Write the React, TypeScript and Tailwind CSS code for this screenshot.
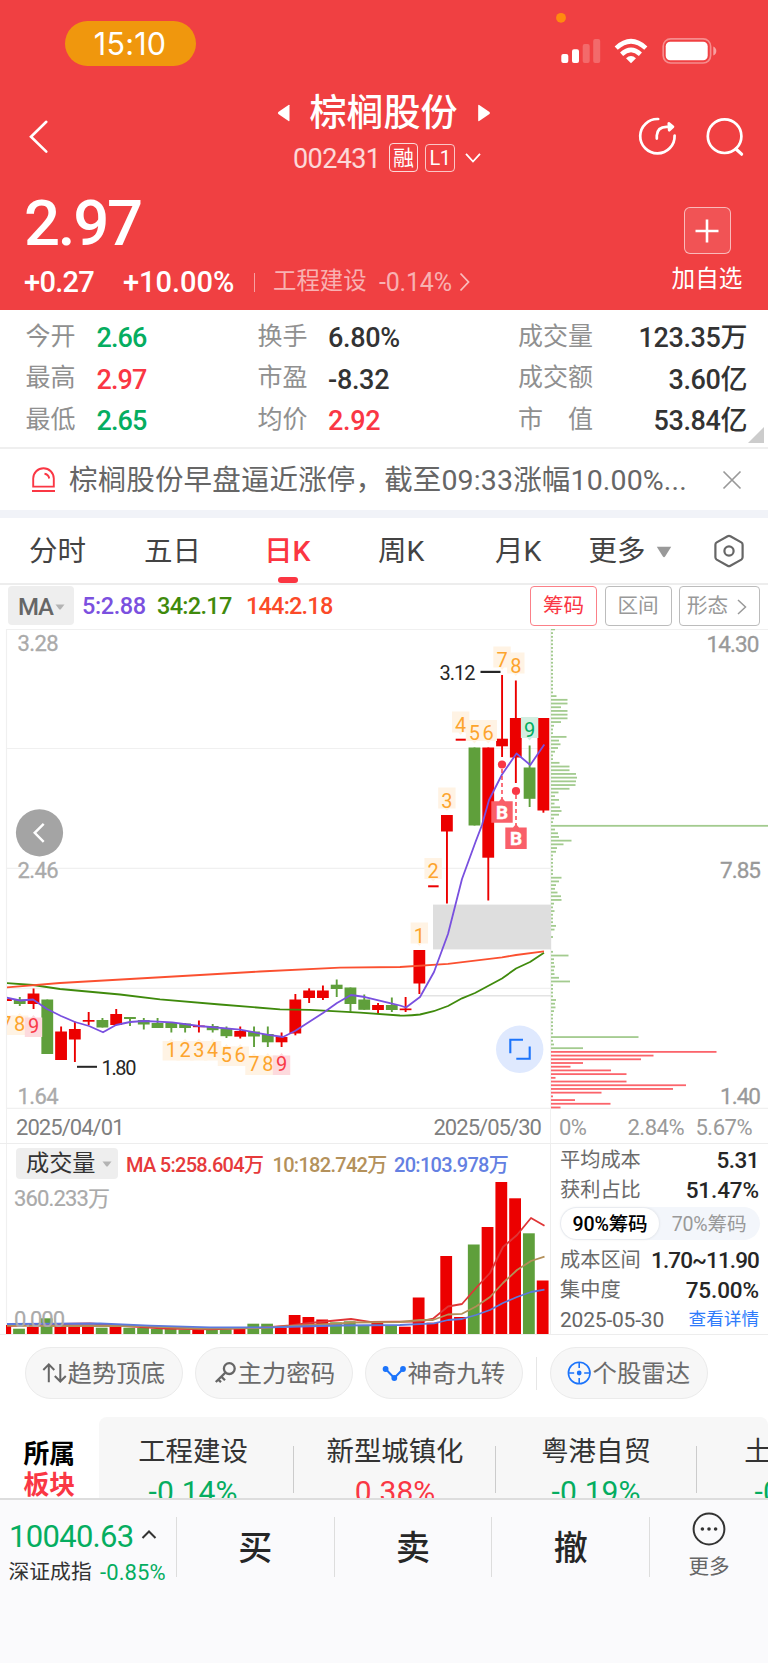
import React from 'react';

const RED = '#ec0000';
const GREEN = '#5f9f3b';

type Candle = [number, 'r' | 'g', number, number, number, number];

// index, colour, body top, body bottom, wick top, wick bottom
const CANDLES: Candle[] = [
  [-2, 'r', 999, 1001, 999, 1001],
  [-1, 'g', 999.5, 1004, 997, 1006],
  [0, 'r', 993.5, 1004, 988.5, 1009],
  [1, 'g', 999.5, 1054, 999.5, 1054],
  [2, 'r', 1031.5, 1060, 1026.5, 1060],
  [3, 'r', 1029, 1039.5, 1021.5, 1062],
  [4, 'r', 1020, 1021.7, 1012, 1025],
  [5, 'g', 1020, 1027.5, 1018, 1027.5],
  [6, 'r', 1014, 1025, 1009, 1025],
  [7, 'g', 1017, 1019, 1017, 1026],
  [8, 'g', 1020, 1024.5, 1018, 1029.5],
  [9, 'g', 1023, 1028, 1018, 1028],
  [10, 'g', 1023, 1028, 1022, 1032.5],
  [11, 'g', 1023.5, 1028, 1023, 1032.5],
  [12, 'r', 1025.5, 1027.2, 1020.5, 1032.5],
  [13, 'g', 1026, 1030.2, 1024, 1032.5],
  [14, 'g', 1028.5, 1036.2, 1026.5, 1038],
  [15, 'r', 1031, 1036.7, 1026.5, 1038.5],
  [16, 'g', 1031.5, 1036.5, 1026.5, 1047],
  [17, 'g', 1034, 1042.3, 1026.5, 1047],
  [18, 'r', 1037, 1042.3, 1032.5, 1047],
  [19, 'r', 999.5, 1033.5, 994, 1035.3],
  [20, 'r', 990.5, 998, 988.3, 1003],
  [21, 'r', 990.5, 998, 985.5, 1000],
  [22, 'g', 984.7, 989, 979.5, 997],
  [23, 'g', 987.5, 1004, 987.5, 1011.7],
  [24, 'g', 999.5, 1009.8, 994.5, 1009.8],
  [25, 'r', 1005, 1010, 1003, 1014],
  [26, 'g', 1005, 1010, 997.5, 1012],
  [27, 'r', 1008.5, 1010.2, 997, 1012],
  [28, 'r', 950, 983.5, 950, 994],
  [29, 'r', 885.3, 887.3, 886, 887],
  [30, 'r', 815, 831.5, 815, 903.5],
  [31, 'r', 738.7, 740.7, 739, 740],
  [32, 'g', 747.5, 825.5, 747.5, 825.5],
  [33, 'r', 747.5, 857.7, 747.5, 900.5],
  [34, 'r', 738.7, 746.3, 675, 757],
  [35, 'r', 718, 757.5, 680.5, 783],
  [36, 'g', 767.5, 798.8, 745.5, 807],
  [37, 'r', 718, 810.5, 718, 812.7],
];

const VOLUMES = [
  1325, 1328.7, 1326.7, 1318.3, 1326.5, 1325, 1326, 1327.7, 1325.5, 1327.7, 1328, 1328.7, 1328.7, 1329.5, 1329.5,
  1329.5, 1329.3, 1329, 1323.7, 1323.7, 1328, 1315, 1317, 1319.5, 1322.3, 1321.3, 1325, 1322.7, 1325, 1326.7, 1297.5,
  1322.7, 1256, 1317, 1244.5, 1227, 1182, 1198.3, 1233.3, 1280.5,
];

const CHIPS = [
  4, 2, 2, 2, 2, 2, 2, 2, 2, 2, 2, 2, 2, 2, 2, 2, 2, 2, 5.5, 16.5, 16.5, 10, 16.5, 16.5, 16.5, 10, 3, 2, 2, 15.5, 8,
  9.5, 7, 4, 2, 2, 8.5, 18.5, 18.5, 25, 26, 25, 24.5, 18.5, 7.5, 4, 8, 3.5, 9, 10.5, 8, 3, 2, 217, 4, 7, 8, 20.5, 12.5,
  6, 5, 2, 2, 2, 2, 2, 2, 10.5, 8, 5, 4, 6.5, 10, 10.5, 3, 2, 3.5, 2, 2, 2, 5, 3.5, 0, 2, 0, 0, 0, 2, 17.5, 3, 3, 4, 3,
  3.5, 8, 19, 2, 2, 2, 2, 5, 4, 4.5, 3, 2, 2, 2, 2, 2, 2, 87.5, 2, 3, 32, 165.5, 102.5, 90, 32, 19.5, 60, 75.5, 4.5,
  75.5, 135, 122, 50.5, 2, 24, 59.5, 9.5,
];

// candle index, digit, top of the tag, pointer direction, tone
const TAGS: [number, string, number, 'up' | 'down', 'o' | 'p' | 'g'][] = [
  [-2, '7', 1015.5, 'up', 'o'],
  [-1, '8', 1015.5, 'up', 'o'],
  [0, '9', 1017.5, 'up', 'p'],
  [10, '1', 1041, 'up', 'o'],
  [11, '2', 1041, 'up', 'o'],
  [12, '3', 1041, 'up', 'o'],
  [13, '4', 1041, 'up', 'o'],
  [14, '5', 1046.5, 'up', 'o'],
  [15, '6', 1046.5, 'up', 'o'],
  [16, '7', 1055.5, 'up', 'o'],
  [17, '8', 1055.5, 'up', 'o'],
  [18, '9', 1055.5, 'up', 'p'],
  [28, '1', 922.5, 'down', 'o'],
  [29, '2', 858, 'down', 'o'],
  [30, '3', 787.5, 'down', 'o'],
  [31, '4', 711.5, 'down', 'o'],
  [32, '5', 720, 'down', 'o'],
  [33, '6', 720, 'down', 'o'],
  [34, '7', 646.5, 'down', 'o'],
  [35, '8', 652.5, 'down', 'o'],
  [36, '9', 717, 'down', 'g'],
];

const TONES = {
  o: ['#fff3e4', '#fda42d'],
  p: ['#fddadd', '#f93a48'],
  g: ['#d2efe1', '#02ad60'],
};

const cx = (i: number) => 33.5 + 13.78 * i;

function KLineChart() {
  return (
    <svg className="block h-[480px] w-[768px]" viewBox="0 629 768 480" fontFamily="Roboto, sans-serif">
      <defs>
        <clipPath id="plot">
          <rect x="7" y="629" width="544" height="480" />
        </clipPath>
      </defs>
      <g stroke="#f0f0f0" strokeWidth="1.2">
        <path d="M6.5 629.5H768M6.5 748.5H551M6.5 868.3H551M6.5 988.3H551M6.5 1108.4H768M6.5 629V1109M550.8 629V1109" />
      </g>
      <path d="M420 995.7H551" stroke="#e3e3e3" strokeWidth="1.6" />
      <g fontSize="22" fill="#aaaaaa" stroke="#aaaaaa" strokeWidth="0.3">
        <text x="17.5" y="651" textLength="41">3.28</text>
        <text x="17.5" y="877.5" textLength="41">2.46</text>
        <text x="17.5" y="1103.5" textLength="41">1.64</text>
      </g>
      <g fontSize="22.5" fill="#999999" stroke="#999999" strokeWidth="0.3" textAnchor="end">
        <text x="759.5" y="651.5" textLength="53">14.30</text>
        <text x="761" y="877.5" textLength="41">7.85</text>
        <text x="761" y="1104" textLength="41">1.40</text>
      </g>

      {CHIPS.map((w, n) => (
        <rect
          key={n}
          x="551"
          y={628.5 + n * 3.706}
          width={w}
          height="1.8"
          fill={n >= 114 ? '#fb646b' : '#a3cb8f'}
        />
      ))}

      <g clipPath="url(#plot)">
        {CANDLES.map(([i, c, top, bottom, high, low]) => (
          <g key={i} fill={c === 'r' ? RED : GREEN}>
            <rect x={cx(i) - 0.9} y={high} width="1.9" height={low - high} />
            <rect
              x={cx(i) - (i === 29 || i === 31 ? 5 : 5.9)}
              y={top}
              width={i === 29 || i === 31 ? 10.5 : 11.8}
              height={bottom - top}
            />
          </g>
        ))}
        <rect x="433" y="904.6" width="118" height="44.8" fill="#dedede" />
        {TAGS.map(([i, d, y, dir, tone]) => (
          <g key={i + d}>
            <path
              d={
                dir === 'up'
                  ? `M${cx(i) - 8.7} ${y}h6.5l2.2-2.5 2.2 2.5h6.5v19.5h-17.4z`
                  : `M${cx(i) - 8.7} ${y}h17.4v21h-6.5l-2.2 2.5-2.2-2.5h-6.5z`
              }
              fill={TONES[tone][0]}
            />
            <text
              x={cx(i)}
              y={y + (dir === 'up' ? 15.5 : 20)}
              fontSize="20"
              textAnchor="middle"
              fill={TONES[tone][1]}
            >
              {d}
            </text>
          </g>
        ))}
        <g fill="none" strokeWidth="1.8" strokeLinejoin="round">
          <path
            stroke="#3f8a0c"
            d="M6 983L33 985L60 989L120 994.5L160 999.3L220 1004.5L280 1009.4L310 1009.8L360 1012.7L400 1015.5Q410 1015.8 420 1014.5Q434 1012 448 1006L462 998.3L475 993Q488 986 502 978.5L516 968.5L530 962L544 952.7"
          />
          <path
            stroke="#fb5030"
            d="M6 987.5L60 983L130 979L200 975L260 971.5L340 967.6L400 967L448 963.8L502 957.3L516 955L544 951.3"
          />
          <path
            stroke="#7950df"
            d="M6 997.5L20 1000.5L33 999.5L47 1009L61 1016L75 1022L89 1026L103 1032.3L116 1025L130 1022L144 1021L172 1022.3L199 1026L240 1029.7L267 1034.7L283 1037L295 1031L309 1022L323 1013L337 1003L351 995L365 997L392 1003.5L400 1005.5L406 1007.5L420 997L434 972L448 934L462 879L475.5 842L482 825L489 800L502 774.5L516.5 753.5L530.3 765L544.3 744.5"
          />
        </g>
        <g stroke="#f93745" strokeWidth="1.4" strokeDasharray="4 3">
          <path d="M502 769V799M516 795V825" />
        </g>
        <g fill="#f93745">
          <circle cx="502" cy="764.5" r="4.1" />
          <circle cx="516" cy="791" r="4.1" />
        </g>
        <g fill="#f95f69">
          <path d="M491.3 801.3h7.7l3-3.5 3 3.5h7.7V822.8h-21.4z" />
          <path d="M505.3 827.6h7.7l3-3.5 3 3.5h7.7V849h-21.4z" />
        </g>
        <g fill="#fff" stroke="#fff" strokeWidth="0.4" fontSize="19" fontWeight="700" textAnchor="middle">
          <text x="502" y="818.7">B</text>
          <text x="516" y="845">B</text>
        </g>
      </g>

      <g fill="#262626" fontSize="20">
        <text x="439.5" y="679.5" textLength="36">3.12</text>
        <rect x="480.5" y="670.8" width="20" height="2.2" />
        <text x="101.5" y="1074.8" textLength="35">1.80</text>
        <rect x="77" y="1065.8" width="20" height="2" />
      </g>

      <circle cx="39.5" cy="832.8" r="23.6" fill="#a4a4a4" />
      <path d="M43.7 823.8L34.7 832.8L43.7 841.8" fill="none" stroke="#fff" strokeWidth="2.4" />
      <circle cx="519.7" cy="1049.3" r="23.7" fill="#dfe9fe" />
      <path
        d="M523 1039.8H510.3V1053.2M529.7 1046.5V1058.7H516.3"
        fill="none"
        stroke="#1c74fb"
        strokeWidth="2.1"
      />
    </svg>
  );
}

function VolumeChart() {
  return (
    <svg className="block h-[156px] w-[550px]" viewBox="0 1179 550 156" fontFamily="Roboto, 'Noto Sans CJK SC', sans-serif">
      <path d="M6.5 1179V1335" stroke="#f0f0f0" strokeWidth="1.2" />
      {VOLUMES.map((top, k) => {
        const x = Math.max(6, cx(k - 2) - 6.6);
        const end = cx(k - 2) + 5.2;
        return (
          <rect key={k} x={x} y={top} width={end - x} height={1334 - top} fill={CANDLES[k][1] === 'r' ? RED : GREEN} />
        );
      })}
      <g fill="none" strokeWidth="1.8" strokeLinejoin="round">
        <path
          stroke="#df3536"
          d="M7 1326L60 1324L90 1323.5L125 1326L165 1328.5L210 1329.3L260 1327.8L290 1325.3L310 1323L325 1321.5L351 1319L370 1321.8L420 1321.5L433 1318.7L448 1306.5L462 1304L476 1288L490 1273L503 1247L517 1235L531 1218L544.5 1225.7"
        />
        <path
          stroke="#b38f58"
          d="M7 1325.5L60 1326L140 1326L200 1328.5L260 1328L300 1325.5L340 1323.5L351 1322.5L400 1322L420 1320L433 1320L448 1314.5L462 1313.8L476 1306.5L490 1297L503 1283L517 1270L531 1261L544.5 1256.7"
        />
        <path
          stroke="#5c7ade"
          d="M7 1324L100 1323.5L150 1325.7L210 1327.3L270 1327.3L300 1326.5L340 1325.5L400 1325L434 1323.4L448 1320L462 1319L476 1315L490 1310L503 1303L517 1297L531 1292L544.5 1289.7"
        />
      </g>
      <g fontSize="22" fill="#aaaaaa" stroke="#aaaaaa" strokeWidth="0.2">
        <text x="14" y="1205.5" textLength="96">360.233万</text>
        <text x="14" y="1327" textLength="51">0.000</text>
      </g>
    </svg>
  );
}

function Caret({ className }: { className: string }) {
  return (
    <svg className={className} viewBox="0 0 10 7" preserveAspectRatio="none">
      <path d="M0.5 0.5H9.5L5.8 6Q5 7 4.2 6Z" fill="currentColor" />
    </svg>
  );
}

function StatRow({ cells }: { cells: [string, string, string][] }) {
  return (
    <div className="flex h-[41.5px] items-center pr-[21px] text-[25px] leading-none">
      <span className="w-[71px] shrink-0 text-[#909090]">{cells[0][0]}</span>
      <span className={`w-[161px] shrink-0 pt-[5px] text-[27px] font-medium tracking-[-0.9px] ${cells[0][2]}`}>
        {cells[0][1]}
      </span>
      <span className="w-[70.5px] shrink-0 text-[#909090]">{cells[1][0]}</span>
      <span className={`w-[190px] shrink-0 pt-[5px] text-[27px] font-medium tracking-[-0.3px] ${cells[1][2]}`}>
        {cells[1][1]}
      </span>
      <span className="w-[80px] shrink-0 whitespace-pre text-[#909090]">{cells[2][0]}</span>
      <span className={`flex-1 pt-[5px] text-right text-[27px] font-medium tracking-[-0.4px] ${cells[2][2]}`}>
        {cells[2][1]}
      </span>
    </div>
  );
}

function Header() {
  return (
    <header className="h-[310px] bg-[#f04042] text-white">
      <div className="flex h-[82px] items-start justify-between pl-[64.5px]">
        <div className="mt-[21px] flex h-[45px] w-[131px] items-center justify-center rounded-full bg-[#f0970d] pt-[2px] font-['Inter'] text-[30.5px] leading-none tracking-[0.2px]">
          15:10
        </div>
        <svg className="h-[82px] w-[228px]" viewBox="540 0 228 82">
          <circle cx="561" cy="17.8" r="4.9" fill="#ff8a0f" />
          <g fill="#fff">
            <rect x="561.3" y="54" width="7" height="9" rx="2" />
            <rect x="572" y="49.2" width="7" height="13.8" rx="2" />
            <rect x="582.7" y="44" width="7" height="19" rx="2" opacity="0.22" />
            <rect x="593.2" y="39" width="7" height="24" rx="2" opacity="0.22" />
          </g>
          <g fill="none" stroke="#fff" strokeWidth="4.6">
            <path d="M616.2 48.1Q631 34.4 645.8 48.1" />
            <path d="M621.6 54.2Q631 45.6 640.4 54.2" />
          </g>
          <path d="M626 58.2Q631 53.6 636 58.2L631 63.3Z" fill="#fff" />
          <rect x="663.2" y="38.8" width="47.4" height="24.2" rx="7.5" fill="none" stroke="#fff" strokeOpacity="0.4" strokeWidth="1.7" />
          <rect x="665.7" y="41.7" width="42" height="18.6" rx="4.5" fill="#fff" />
          <path d="M713.3 46.5Q716.3 48 716.3 51Q716.3 54 713.3 55.5Z" fill="#fff" fillOpacity="0.5" />
        </svg>
      </div>

      <div className="flex h-[108px] items-start">
        <svg className="mt-[36px] ml-[26px] h-[38px] w-[26px]" viewBox="26 118 26 38" fill="none" stroke="#fff" strokeWidth="2.6">
          <path d="M46.3 121.8L31 136.7L46.3 151.6" strokeLinecap="round" />
        </svg>
        <div className="ml-[218px] w-[280px] pt-[11px]">
          <div className="flex items-center pl-[7px]">
            <svg className="h-[18px] w-[14px]" viewBox="0 0 14 18" fill="#fff">
              <path d="M12.5 1.2V16.8Q12.3 17.5 11.5 17L1.3 10Q0.4 9 1.3 8L11.5 0.9Q12.3 0.5 12.5 1.2Z" />
            </svg>
            <h1 className="ml-[18.5px] h-[40px] w-[151px] pt-px text-[37px] leading-[39px] font-medium whitespace-nowrap">棕榈股份</h1>
            <svg className="ml-[16px] h-[18px] w-[14px]" viewBox="0 0 14 18" fill="#fff">
              <path d="M1.2 1.2V16.8Q1.4 17.5 2.2 17L12.5 10Q13.4 9 12.5 8L2.2 0.9Q1.4 0.5 1.2 1.2Z" />
            </svg>
          </div>
          <div className="mt-[9.5px] flex h-[30px] items-center pl-[23px] leading-none">
            <span className="w-[96px] pt-[4px] text-[27px] tracking-[-0.6px] text-white/80">002431</span>
            <span className="flex h-[29px] w-[29px] items-center justify-center rounded-[4px] border-[1.3px] border-white/80 pt-px text-[21px]">
              融
            </span>
            <span className="ml-[7px] flex h-[28px] w-[30px] items-center justify-center rounded-[4px] border border-white/70 text-[20px] tracking-[-0.5px]">
              L1
            </span>
            <svg className="ml-[9px] h-[12px] w-[18px]" viewBox="0 0 18 12" fill="none" stroke="#fff" strokeWidth="1.8">
              <path d="M2 1.8L9 9.5L16 1.8" />
            </svg>
          </div>
        </div>
        <svg className="mt-[30px] ml-[84px] h-[50px] w-[114px]" viewBox="634 112 114 50" fill="none" stroke="#fff" strokeWidth="2.7" strokeLinecap="round" strokeLinejoin="round">
          <path d="M658.2 119A17.2 17.2 0 1 0 674.6 135.5" />
          <path d="M656.8 138.6V135.5Q657.3 127 666.5 126.8H669" />
          <path d="M668.8 123.3L673 126.7L669.2 130.2Z" fill="#fff" />
          <circle cx="724.6" cy="136.2" r="16.8" />
          <path d="M736 149L741.6 154.2" strokeWidth="3.2" />
        </svg>
      </div>

      <div className="flex justify-between">
        <div className="pl-[24px]">
          <div className="h-[73px] pt-px text-[63.5px] leading-[66px] font-medium tracking-[-2.3px]">2.97</div>
          <div className="mt-[2px] flex h-[34px] items-center leading-none">
            <span className="w-[99px] text-[29px] font-medium tracking-[-0.7px]">+0.27</span>
            <span className="w-[131px] text-[29px] font-medium">+10.00%</span>
            <span className="h-[19px] w-px bg-white/50" />
            <span className="ml-[18px] w-[106px] text-[23.4px] text-white/60">工程建设</span>
            <span className="w-[80px] text-[25px] tracking-[-0.2px] text-white/60">-0.14%</span>
            <svg className="h-[20px] w-[12px]" viewBox="0 0 12 20" fill="none" stroke="#fff" strokeOpacity="0.65" strokeWidth="1.8">
              <path d="M1.5 1.5L9.5 10L1.5 18.5" />
            </svg>
          </div>
        </div>
        <div className="mt-[17px] mr-[25.5px] flex w-[71px] flex-col items-center">
          <div className="flex h-[47px] w-[47px] items-center justify-center rounded-[6px] border border-white/60 bg-white/10">
            <svg className="h-[26px] w-[26px]" viewBox="0 0 26 26" stroke="#fff" strokeWidth="2.6">
              <path d="M1.5 13H24.5M13 1.5V24.5" />
            </svg>
          </div>
          <span className="mt-[14px] text-[23.6px] leading-none whitespace-nowrap">加自选</span>
        </div>
      </div>
    </header>
  );
}

function Tabs() {
  const tab = 'flex h-[65px] shrink-0 items-center pt-[4px]';
  return (
    <nav className="flex h-[67px] items-center border-b-2 border-[#ededed] pl-[29px] text-[28.5px] leading-none text-[#434343]">
      <span className={`${tab} w-[115px]`}>分时</span>
      <span className={`${tab} w-[120px]`}>五日</span>
      <span className="flex h-[65px] w-[114px] shrink-0 flex-col font-medium text-[#fb3642]">
        <span className="flex h-[59px] items-center pt-[10px]">日K</span>
        <span className="ml-[13.5px] h-[6px] w-[20px] rounded-[3px] bg-[#fb3642]" />
      </span>
      <span className={`${tab} w-[117px]`}>周K</span>
      <span className={`${tab} w-[93.5px]`}>月K</span>
      <span className={tab}>更多</span>
      <Caret className="mt-[3px] ml-[10px] h-[12px] w-[16px] text-[#999999]" />
      <svg className="ml-[40.5px] h-[34px] w-[34px]" viewBox="0 0 34 34" fill="none" stroke="#666666" strokeWidth="2.2" strokeLinejoin="round">
        <path d="M15.6 2.2Q17 1.4 18.4 2.2L29.3 8.4Q30.6 9.2 30.6 10.7V23.3Q30.6 24.8 29.3 25.6L18.4 31.8Q17 32.6 15.6 31.8L4.7 25.6Q3.4 24.8 3.4 23.3V10.7Q3.4 9.2 4.7 8.4Z" />
        <circle cx="17" cy="17" r="4.6" />
      </svg>
    </nav>
  );
}

function CostPanel() {
  const row = 'flex items-center justify-between leading-none whitespace-nowrap';
  const label = 'text-[20.2px] text-[#6b6b6b]';
  const value = 'text-[22.5px] font-medium text-[#262626]';
  return (
    <div className="h-[191px] w-[218px] border-l border-[#ededed] pr-[9px] pl-[9px]">
      <div className={`${row} h-[31px] pt-[1px]`}>
        <span className={label}>平均成本</span>
        <span className={`${value} tracking-[-0.5px]`}>5.31</span>
      </div>
      <div className={`${row} h-[30px]`}>
        <span className={label}>获利占比</span>
        <span className={`${value} tracking-[-0.1px]`}>51.47%</span>
      </div>
      <div className="mt-[2px] flex h-[33px] w-[200px] items-center rounded-full bg-[#f3f6fb] p-px text-[19.6px] leading-none">
        <span className="flex h-[31px] w-[98px] items-center justify-center rounded-full bg-white pt-[2px] font-medium tracking-[-0.2px] text-black shadow-[0_0_3px_rgba(0,0,0,0.12)]">
          90%筹码
        </span>
        <span className="flex-1 pt-[2px] text-center tracking-[-0.2px] text-[#999999]">70%筹码</span>
      </div>
      <div className={`${row} mt-[5px] h-[30px]`}>
        <span className={label}>成本区间</span>
        <span className={`${value} tracking-[-0.9px]`}>1.70~11.90</span>
      </div>
      <div className={`${row} h-[30px]`}>
        <span className={label}>集中度</span>
        <span className={`${value} tracking-[-0.1px]`}>75.00%</span>
      </div>
      <div className={`${row} h-[29px] pt-px`}>
        <span className="text-[21px] tracking-[-0.2px] text-[#666666]">2025-05-30</span>
        <span className="text-[17.6px] text-[#2f7bfb]">查看详情</span>
      </div>
    </div>
  );
}

function Pill({ icon, text }: { icon: React.ReactNode; text: string }) {
  return (
    <div className="flex h-[52px] w-[158px] shrink-0 items-center rounded-full border border-[#ebebeb] bg-[#f7f7f7] pl-[16px] text-[24.4px] leading-none whitespace-nowrap text-[#6b6b6b]">
      <svg className="h-[26px] w-[26px] shrink-0" viewBox="0 0 26 26" fill="none">
        {icon}
      </svg>
      <span className="pt-[2px]">{text}</span>
    </div>
  );
}

function Sector({ name, change, tone }: { name: string; change: string; tone: string }) {
  return (
    <div className="flex w-[200px] shrink-0 flex-col items-center leading-none">
      <span className="mt-[22px] text-[27.4px] text-[#333333]">{name}</span>
      <span className={`mt-[11px] text-[30px] ${tone}`}>{change}</span>
    </div>
  );
}

export default function App() {
  const dark = 'text-[#333333]';
  const up = 'text-[#fa3744]';
  const down = 'text-[#05ad60]';
  return (
    <div className="h-[1663px] w-[768px] overflow-hidden bg-white font-['Roboto','Noto_Sans_CJK_SC',sans-serif]">
      <Header />

      <section className="flex h-[139px] items-end border-b-2 border-[#efefef] pl-[25.5px]">
        <div className="w-full pb-[7px]">
          <StatRow cells={[['今开', '2.66', down], ['换手', '6.80%', dark], ['成交量', '123.35万', dark]]} />
          <StatRow cells={[['最高', '2.97', up], ['市盈', '-8.32', dark], ['成交额', '3.60亿', dark]]} />
          <StatRow cells={[['最低', '2.65', down], ['均价', '2.92', up], ['市　值', '53.84亿', dark]]} />
        </div>
        <svg className="mr-[4px] mb-[4px] -ml-[20px] h-[16px] w-[16px] shrink-0" viewBox="0 0 16 16">
          <path d="M16 0V16H0Z" fill="#cccccc" />
        </svg>
      </section>

      <section className="flex h-[61px] items-center pl-[31px]">
        <svg className="h-[26px] w-[25px]" viewBox="0 0 25 26" fill="none" stroke="#fa3744" strokeWidth="1.9">
          <path d="M2.2 19.6V11.5A10.2 10.2 0 0 1 22.8 11.5V19.6Z" />
          <path d="M1 24H24M13.5 6.8Q17.5 7.3 18.2 11.5" />
        </svg>
        <p className="ml-[13px] w-[617px] pt-[4px] text-[28.5px] leading-none tracking-[0.15px] whitespace-nowrap text-[#666666]">
          棕榈股份早盘逼近涨停，截至09:33涨幅10.00%...
        </p>
        <svg className="ml-[36px] h-[20px] w-[20px]" viewBox="0 0 20 20" stroke="#999999" strokeWidth="1.7">
          <path d="M1.5 1.5L18.5 18.5M18.5 1.5L1.5 18.5" />
        </svg>
      </section>
      <div className="h-[8px] bg-[#f1f3f8]" />

      <Tabs />

      <section className="flex h-[44px] items-start pt-px pl-[8px] leading-none">
        <div className="flex h-[39px] w-[66px] items-center rounded-[4px] bg-[#eeeeee] pt-[2px] pl-[10px] text-[24px] font-medium tracking-[-1.2px] text-[#666666]">
          MA
          <Caret className="ml-[2px] h-[6px] w-[10px] text-[#b3b3b3]" />
        </div>
        <div className="flex h-[40px] items-center pt-[2px] text-[23.5px] font-medium tracking-[-0.4px]">
          <span className="ml-[8px] w-[75px] text-[#7b50df]">5:2.88</span>
          <span className="w-[89px] tracking-[-0.7px] text-[#3f8a0c]">34:2.17</span>
          <span className="w-[284px] tracking-[-0.8px] text-[#fb4a28]">144:2.18</span>
        </div>
        <div className="flex text-[20.6px]">
          <span className="flex h-[40px] w-[67px] items-center justify-center rounded-[4px] border-[1.4px] border-[#fb8088] pt-px text-[#fa3744]">筹码</span>
          <span className="ml-[7.5px] flex h-[40px] w-[67px] items-center justify-center rounded-[4px] border-[1.4px] border-[#bcbcbc] pt-px text-[#999999]">区间</span>
          <span className="ml-[7.5px] flex h-[40px] w-[81px] items-center rounded-[4px] border-[1.4px] border-[#bcbcbc] pt-px pl-[7px] text-[#999999]">
            形态
            <svg className="ml-[9px] h-[16px] w-[10px]" viewBox="0 0 10 16" fill="none" stroke="#999999" strokeWidth="1.5">
              <path d="M1 1L8.5 8L1 15" />
            </svg>
          </span>
        </div>
      </section>

      <KLineChart />

      <section className="flex h-[35px] border-b border-[#ededed] pl-[6px] text-[22px] leading-none">
        <div className="flex w-[545px] items-center justify-between border-r border-l border-[#f0f0f0] pt-[3px] pr-[9px] pl-[9px] tracking-[-0.95px] text-[#7f7f7f]">
          <span>2025/04/01</span>
          <span>2025/05/30</span>
        </div>
        <div className="flex items-center pt-[3px] pl-[8px] tracking-[-0.5px] text-[#9a9a9a]">
          <span className="w-[68.5px]">0%</span>
          <span className="w-[68px]">2.84%</span>
          <span>5.67%</span>
        </div>
      </section>

      <section className="flex h-[191px] border-b border-[#ededed]">
        <div className="w-[550px]">
          <div className="ml-[6px] flex h-[35px] items-start border-l border-[#f0f0f0] pt-[4px] pl-[9px] text-[20.5px] leading-none">
            <div className="flex h-[31px] w-[102px] shrink-0 items-center rounded-[4px] bg-[#eeeeee] pl-[10px] text-[23.2px] text-[#333333]">
              成交量
              <Caret className="ml-[6px] h-[6px] w-[10px] text-[#b3b3b3]" />
            </div>
            <div className="flex h-[33px] items-center pt-px pl-[8px] tracking-[-0.7px] whitespace-nowrap">
              <span className="w-[146.5px] text-[20px] font-medium text-[#e63a3b]">MA 5:258.604万</span>
              <span className="w-[121.5px] text-[20px] font-medium text-[#b4915b]">10:182.742万</span>
              <span className="text-[20px] font-medium text-[#6480e2]">20:103.978万</span>
            </div>
          </div>
          <VolumeChart />
        </div>
        <CostPanel />
      </section>

      <section className="flex h-[82px] items-start pt-[12px] pl-[24.5px]">
        <Pill
          text="趋势顶底"
          icon={
            <path
              d="M6.8 22.3V4.6M1.3 10L6.8 4.4L12.3 10M18.3 4V21.4M12.8 16L18.3 21.5L23.8 16"
              stroke="#666666"
              strokeWidth="2"
            />
          }
        />
        <div className="w-[12px] shrink-0" />
        <Pill
          text="主力密码"
          icon={
            <g stroke="#666666" strokeWidth="2.3">
              <circle cx="17.3" cy="8.6" r="5.4" />
              <path d="M13.4 12.6L3.8 22M9.3 16.6L13 20.2M6.3 19.6L9 22.2" />
            </g>
          }
        />
        <div className="w-[12px] shrink-0" />
        <Pill
          text="神奇九转"
          icon={
            <g fill="#1c74fb">
              <path d="M3.6 9L12.3 18L21 9" fill="none" stroke="#1c74fb" strokeWidth="2" />
              <circle cx="3.6" cy="9" r="2.9" />
              <circle cx="12.3" cy="18" r="2.9" />
              <circle cx="21" cy="9" r="2.9" />
            </g>
          }
        />
        <div className="mt-[10px] mr-[13px] ml-[13px] h-[33px] w-px shrink-0 bg-[#e6e6e6]" />
        <Pill
          text="个股雷达"
          icon={
            <g stroke="#1c74fb" strokeWidth="1.6">
              <circle cx="12.2" cy="13" r="10.8" />
              <circle cx="12.2" cy="13" r="1.6" fill="#1c74fb" />
              <path d="M12.2 2V8M12.2 18V24M1.2 13H7.2M17.2 13H23.2" />
            </g>
          }
        />
      </section>

      <section className="flex h-[81px] overflow-hidden">
        <div className="w-[99px] shrink-0 pt-[22px] pl-[23.5px] text-[25.8px] leading-[31px] font-bold">
          <div className="text-black">所属</div>
          <div className="text-[#fa3744]">板块</div>
        </div>
        <div className="flex w-[669px] shrink-0 overflow-hidden rounded-t-[8px] bg-[#f7f7f7]">
          <div className="-ml-[6px] flex">
            <Sector name="工程建设" change="-0.14%" tone={down} />
            <div className="mt-[29px] mr-px h-[47px] w-px shrink-0 bg-[#cccccc]" />
            <Sector name="新型城镇化" change="0.38%" tone={up} />
            <div className="mt-[29px] h-[47px] w-px shrink-0 bg-[#cccccc]" />
            <Sector name="粤港自贸" change="-0.19%" tone={down} />
            <div className="mt-[29px] mr-[2px] h-[47px] w-px shrink-0 bg-[#cccccc]" />
            <Sector name="土地流转" change="-0.25%" tone={down} />
          </div>
        </div>
      </section>

      <footer className="flex h-[165px] items-start border-t-2 border-[#dddddd] bg-[#fafafc] leading-none">
        <div className="w-[176px] shrink-0 pt-[20px]">
          <div className="flex h-[32px] items-center pl-[9px]">
            <span className="w-[131.5px] pt-px text-[31px] tracking-[-0.7px] text-[#05ad60]">10040.63</span>
            <svg className="mb-[3px] h-[9px] w-[16px]" viewBox="0 0 16 9" fill="none" stroke="#333333" strokeWidth="2">
              <path d="M1.5 8L8 1.5L14.5 8" />
            </svg>
          </div>
          <div className="mt-[7px] flex h-[26px] items-center pl-[8.5px] whitespace-nowrap">
            <span className="w-[91.5px] text-[20.8px] text-[#333333]">深证成指</span>
            <span className="pt-[2px] text-[22px] tracking-[0.1px] text-[#05ad60]">-0.85%</span>
          </div>
        </div>
        {['买', '卖', '撤'].map((t) => (
          <div key={t} className="mt-[17px] flex h-[60px] w-[157.7px] shrink-0 items-center justify-center border-l border-[#dddddd] pt-[2px] text-[34px] font-medium text-[#262626]">
            {t}
          </div>
        ))}
        <div className="mt-[17px] flex h-[60px] flex-1 flex-col items-center border-l border-[#dddddd]">
          <svg className="-mt-[5px] h-[34px] w-[34px] shrink-0" viewBox="0 0 34 34">
            <circle cx="17" cy="17" r="15.4" fill="none" stroke="#333333" strokeWidth="2" />
            <g fill="#333333">
              <circle cx="10.4" cy="17" r="1.8" />
              <circle cx="17" cy="17" r="1.8" />
              <circle cx="23.6" cy="17" r="1.8" />
            </g>
          </svg>
          <span className="mt-[11px] text-[20.6px] text-[#666666]">更多</span>
        </div>
      </footer>
    </div>
  );
}
